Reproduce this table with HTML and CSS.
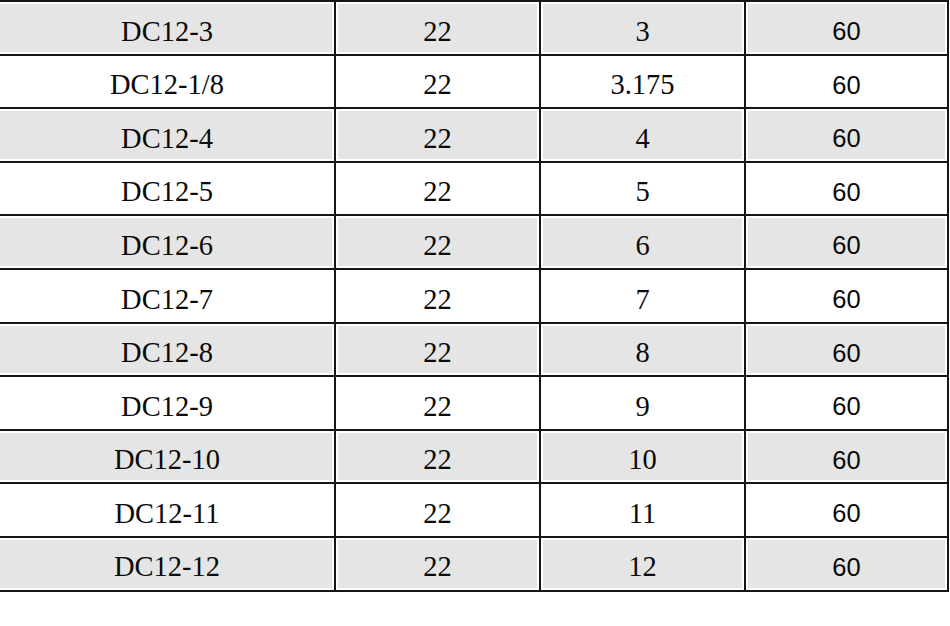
FILE: index.html
```html
<!DOCTYPE html>
<html>
<head>
<meta charset="utf-8">
<link rel="stylesheet" href="styles.css">
</head>
<body>
<table class="spec">
  <colgroup>
    <col class="c1"><col class="c2"><col class="c3"><col class="c4">
  </colgroup>
  <tbody>
    <tr class="alt"><td>DC12-3</td><td>22</td><td>3</td><td class="num">60</td></tr>
    <tr><td>DC12-1/8</td><td>22</td><td>3.175</td><td class="num">60</td></tr>
    <tr class="alt"><td>DC12-4</td><td>22</td><td>4</td><td class="num">60</td></tr>
    <tr><td>DC12-5</td><td>22</td><td>5</td><td class="num">60</td></tr>
    <tr class="alt"><td>DC12-6</td><td>22</td><td>6</td><td class="num">60</td></tr>
    <tr><td>DC12-7</td><td>22</td><td>7</td><td class="num">60</td></tr>
    <tr class="alt"><td>DC12-8</td><td>22</td><td>8</td><td class="num">60</td></tr>
    <tr><td>DC12-9</td><td>22</td><td>9</td><td class="num">60</td></tr>
    <tr class="alt"><td>DC12-10</td><td>22</td><td>10</td><td class="num">60</td></tr>
    <tr><td>DC12-11</td><td>22</td><td>11</td><td class="num">60</td></tr>
    <tr class="alt"><td>DC12-12</td><td>22</td><td>12</td><td class="num">60</td></tr>
  </tbody>
</table>
</body>
</html>
```

FILE: styles.css
```css
html, body {
  margin: 0;
  padding: 0;
  background: #ffffff;
}

.spec {
  border-collapse: collapse;
  table-layout: fixed;
  width: 948px;
  margin-top: 0;
}

.c1 { width: 335px; }
.c2 { width: 205px; }
.c3 { width: 205px; }
.c4 { width: 203px; }

.spec td {
  border: 2px solid #151515;
  height: 53.6px;
  padding: 8px 0 0 0;
  box-sizing: border-box;
  text-align: center;
  vertical-align: middle;
  font-family: "Liberation Serif", "Noto Sans CJK SC", serif;
  font-size: 28.5px;
  color: #0a0a0a;
  line-height: 1;
}

.spec td:first-child {
  border-left: none;
}

.spec td.num {
  font-family: "Liberation Sans", Arial, sans-serif;
  font-size: 25.5px;
}

.spec tr.alt td {
  background: #e5e5e5;
  box-shadow: inset 0 0 0 2px #ffffff;
}

.spec tr.alt td:first-child {
  box-shadow: inset 0 2px 0 #ffffff, inset 0 -2px 0 #ffffff, inset -2px 0 0 #ffffff;
}
```
